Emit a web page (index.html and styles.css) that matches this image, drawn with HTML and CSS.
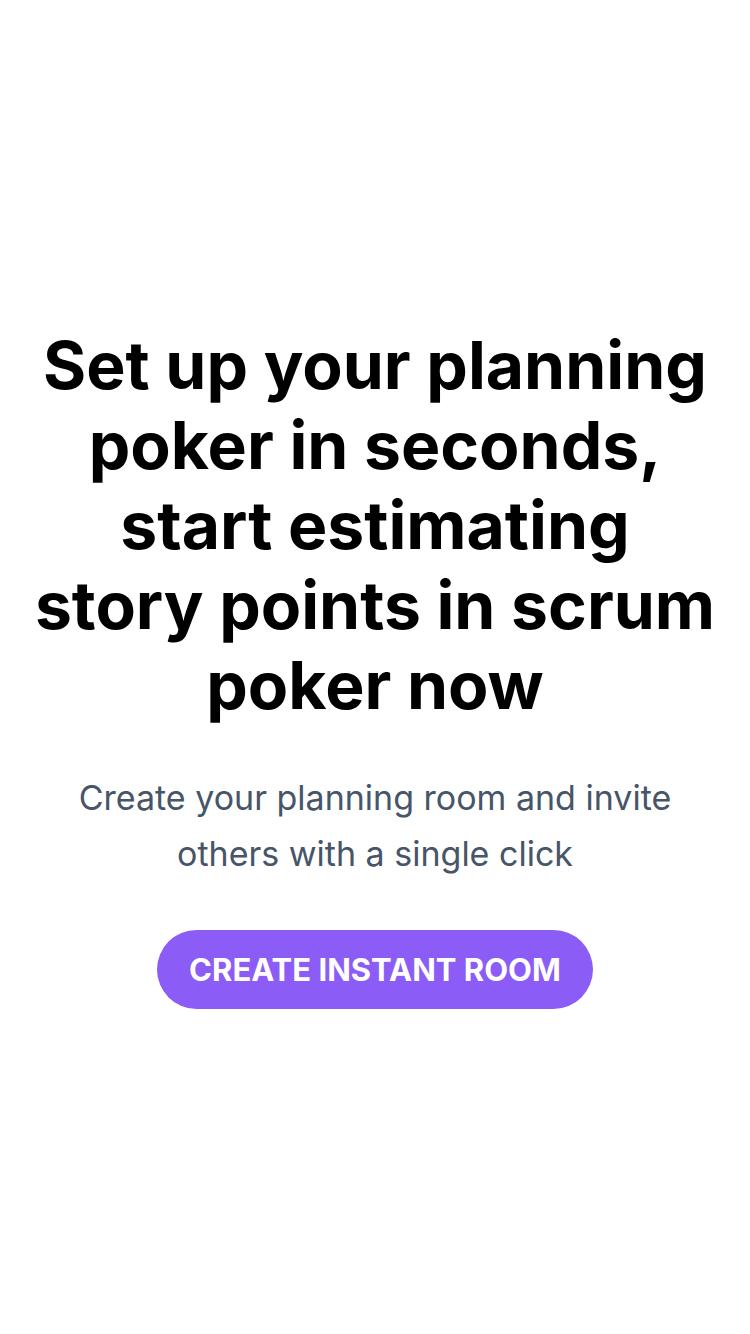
FILE: index.html
```html
<!DOCTYPE html>
<html lang="en">
<head>
<meta charset="utf-8">
<title>Planning poker</title>
<link rel="stylesheet" href="styles.css">
</head>
<body>
<main class="hero">
  <h1 class="hero-title">Set up your planning poker in seconds, start estimating story points in scrum poker now</h1>
  <p class="hero-sub">Create your planning room and invite others with a single click</p>
  <button class="hero-btn" type="button">CREATE INSTANT ROOM</button>
</main>
</body>
</html>
```
FILE: styles.css
```css
* { box-sizing: border-box; }
html, body { margin: 0; padding: 0; background: #ffffff; }
body { font-family: Inter, "Noto Sans", sans-serif; }
.hero {
  min-height: 1334px;
  display: flex;
  flex-direction: column;
  align-items: center;
  justify-content: center;
  padding: 0 30px;
  text-align: center;
}
.hero-title {
  margin: 0;
  font-size: 66px;
  line-height: 80px;
  font-weight: 700;
  color: #000;
}
.hero-sub {
  margin: 45px 0 0;
  font-size: 34px;
  line-height: 56px;
  color: #475569;
  max-width: 640px;
}
.hero-btn {
  margin-top: 48px;
  width: 436px;
  height: 79px;
  border: 0;
  border-radius: 40px;
  background: #8b5cf6;
  color: #fff;
  font-family: inherit;
  font-size: 31px;
  font-weight: 700;
}
```
